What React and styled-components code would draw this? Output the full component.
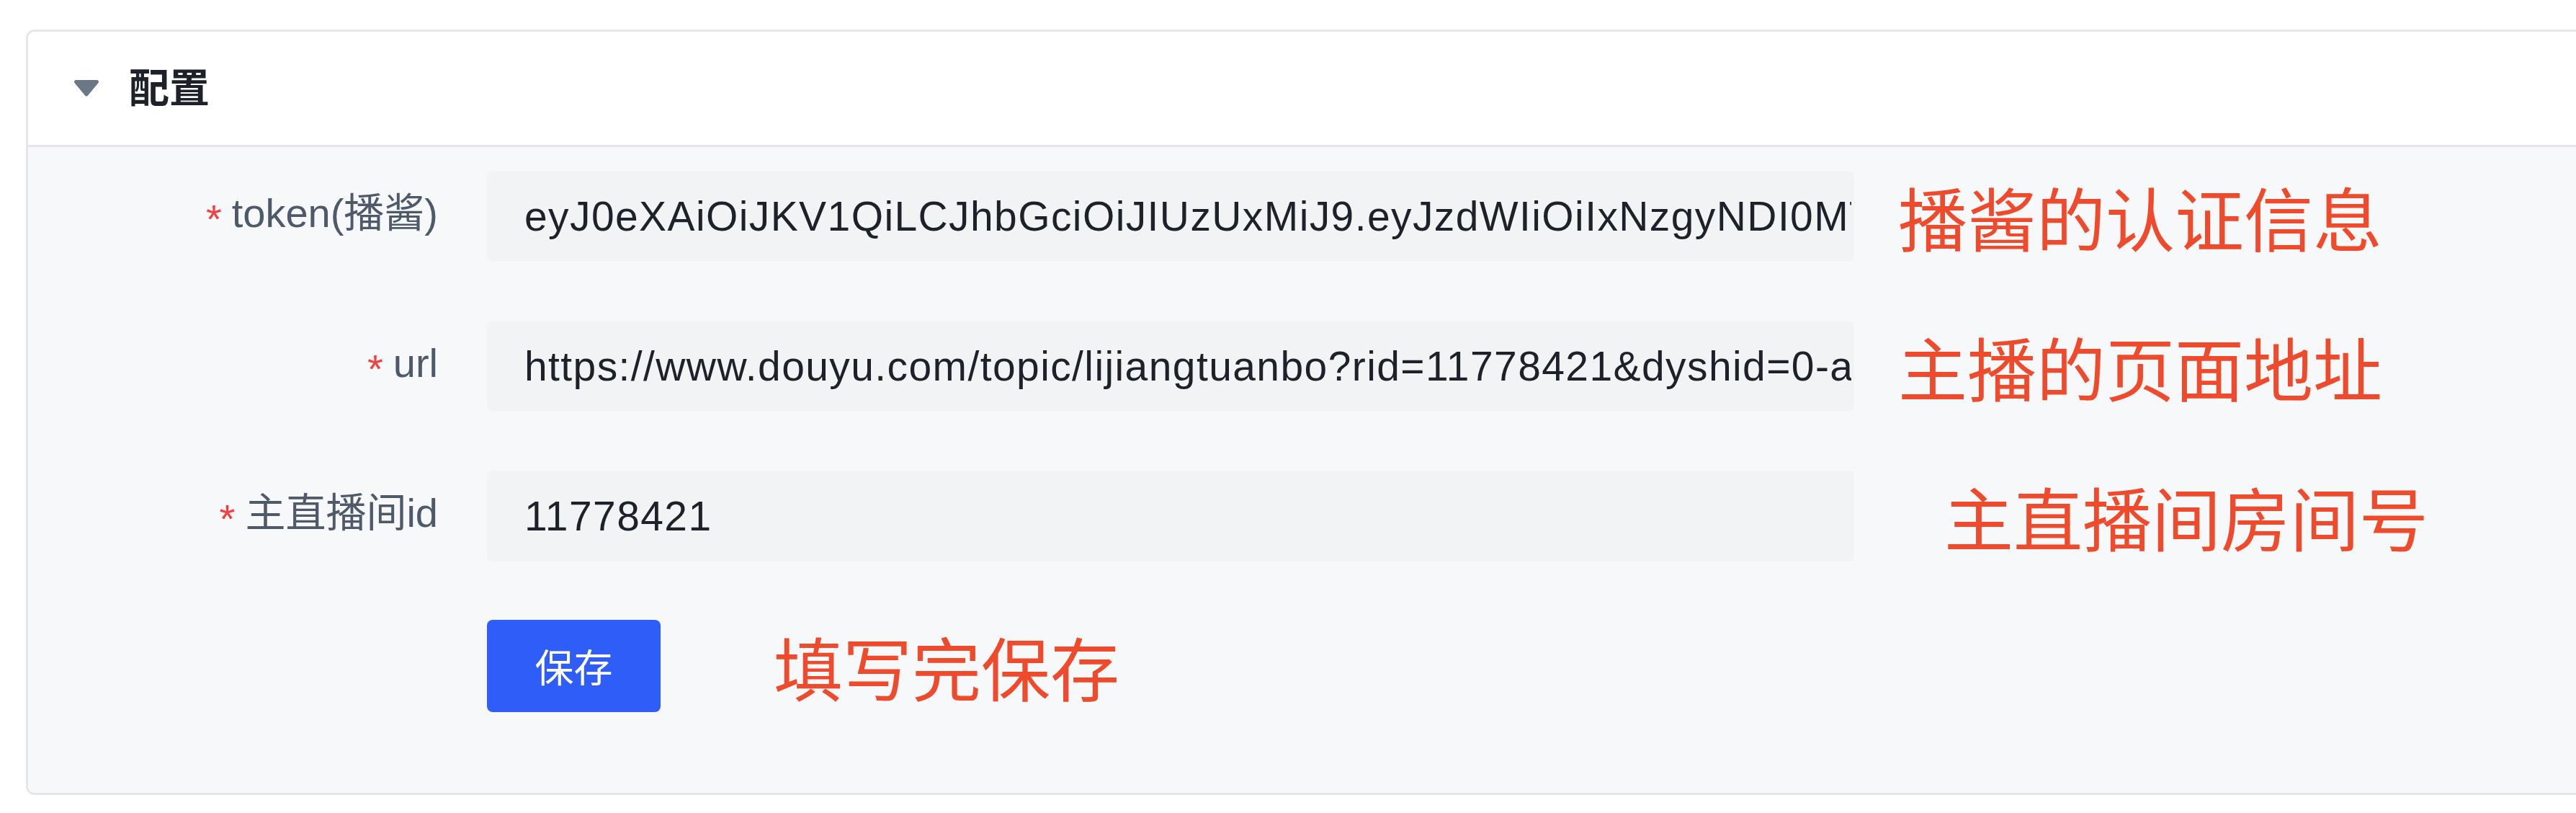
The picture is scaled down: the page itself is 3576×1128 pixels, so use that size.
import React from 'react'
import styled, { createGlobalStyle } from 'styled-components'

const GlobalStyle = createGlobalStyle`
  html, body {
    margin: 0;
    padding: 0;
    background: #ffffff;
    overflow: hidden;
  }
  * {
    box-sizing: border-box;
  }
`

const latin = `'Liberation Sans', 'Noto Sans CJK SC', sans-serif`

const Page = styled.div`
  width: 3576px;
  height: 1128px;
  padding: 41px 0 0 36px;
  overflow: hidden;
`

const Card = styled.div`
  width: 3600px;
  border: 3px solid #e5e6eb;
  border-radius: 12px;
  overflow: hidden;
`

const Header = styled.div`
  display: flex;
  align-items: center;
  height: 160px;
  padding-left: 64px;
  background: #ffffff;
  border-bottom: 3px solid #e5e6eb;
`

const Caret = styled.svg`
  width: 34px;
  height: 23px;
  margin-right: 42px;
  flex: none;
`

const Title = styled.div`
  font-family: ${latin};
  font-size: 56px;
  font-weight: 700;
  color: #1d2129;
  line-height: 1;
`

const Body = styled.div`
  display: flex;
  flex-direction: column;
  gap: 82px;
  padding: 33px 0 112px;
  background: #f7f8fa;
`

const Row = styled.div`
  display: flex;
  align-items: center;
  margin-top: ${(p) => (p.$tight ? '-1px' : '0')};
`

const Label = styled.div`
  width: 637px;
  flex: none;
  padding-right: 68px;
  text-align: right;
  font-family: ${latin};
  font-size: 56px;
  color: #4e5969;
  line-height: 1;
  white-space: nowrap;
`

const Star = styled.span`
  color: #f53f3f;
  margin-right: 14px;
  vertical-align: -0.14em;
`

const Field = styled.input`
  width: 1898px;
  height: 126px;
  flex: none;
  padding: 0 4px 0 52px;
  border: none;
  border-radius: 8px;
  outline: none;
  background: #f2f3f5;
  font-family: ${latin};
  font-size: 57px;
  letter-spacing: 1.4px;
  color: #1d2129;
`

const SaveButton = styled.button`
  width: 241px;
  height: 128px;
  flex: none;
  border: none;
  border-radius: 8px;
  background: #2e5ef7;
  color: #ffffff;
  font-family: 'Noto Sans CJK SC', sans-serif;
  font-size: 54px;
  line-height: 1;
  cursor: pointer;
`

const Note = styled.div`
  margin-left: ${(p) => p.$offset}px;
  font-family: 'Noto Sans CJK SC', sans-serif;
  font-size: 96px;
  font-weight: 400;
  line-height: 1;
  color: #ee4a2b;
  white-space: nowrap;
`

const fields = [
  {
    key: 'token',
    label: 'token(播酱)',
    value: 'eyJ0eXAiOiJKV1QiLCJhbGciOiJIUzUxMiJ9.eyJzdWIiOiIxNzgyNDI0MTA',
    note: '播酱的认证信息',
    offset: 61,
  },
  {
    key: 'url',
    label: 'url',
    value: 'https://www.douyu.com/topic/lijiangtuanbo?rid=11778421&dyshid=0-a',
    note: '主播的页面地址',
    offset: 61,
  },
  {
    key: 'rid',
    label: '主直播间id',
    value: '11778421',
    note: '主直播间房间号',
    offset: 125,
  },
]

const App = () => {
  return (
    <>
      <GlobalStyle />
      <Page>
        <Card>
          <Header>
            <Caret viewBox="0 0 34 23">
              <path
                d="M2.5 0h29a2.5 2.5 0 0 1 2 4L19 21.6a2.6 2.6 0 0 1-4 0L.5 4a2.5 2.5 0 0 1 2-4z"
                fill="#6b7785"
              />
            </Caret>
            <Title>配置</Title>
          </Header>
          <Body>
            {fields.map((f) => (
              <Row key={f.key}>
                <Label>
                  <Star>*</Star>
                  {f.label}
                </Label>
                <Field readOnly defaultValue={f.value} />
                <Note $offset={f.offset}>{f.note}</Note>
              </Row>
            ))}
            <Row $tight>
              <Label />
              <SaveButton>保存</SaveButton>
              <Note $offset={157}>填写完保存</Note>
            </Row>
          </Body>
        </Card>
      </Page>
    </>
  )
}

export default App
